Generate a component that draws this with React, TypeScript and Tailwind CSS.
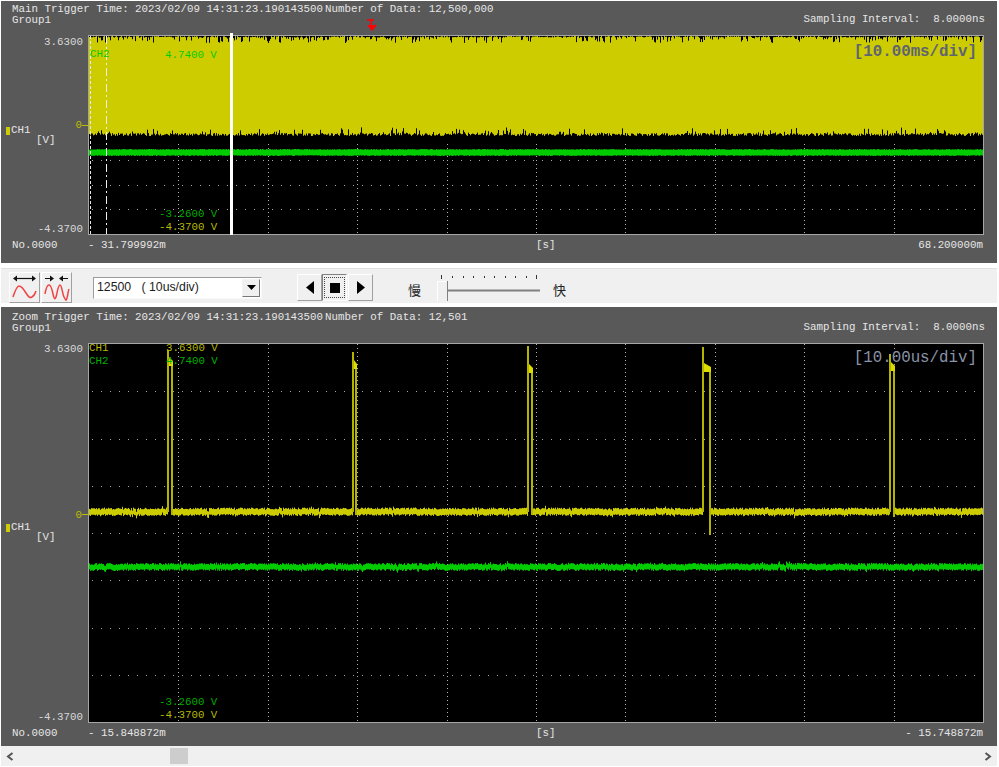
import { useMemo } from 'react';

const FONT = "font-['Liberation_Mono',monospace]";
const GRID_X = Array.from({ length: 9 }, (_, i) => Math.round(89.4 * (i + 1)) + 0.5);

// small seeded generator so the noise is the same on every run
function makeRand(seed: number) {
  let s = seed;
  return () => {
    s = (s * 16807) % 2147483647;
    return s / 2147483647;
  };
}

function Grid({ h }: { h: number }) {
  const rows = Array.from({ length: 7 }, (_, i) => Math.round((h / 8) * (i + 1)) + 0.5);
  return (
    <g>
      {GRID_X.map((x) => (
        <line key={x} x1={x} x2={x} y1={0} y2={h} stroke="#b4b4b4" strokeDasharray="1 3" />
      ))}
      {rows.map((y) => (
        <line key={y} x1={3} x2={894} y1={y} y2={y} stroke="#a8a8a8" strokeDasharray="1 8" />
      ))}
    </g>
  );
}

function MainWave() {
  const { top, bottom, green } = useMemo(() => {
    const r = makeRand(4711);
    let t = '';
    let b = '';
    let g = '';
    for (let x = 0; x < 894; x += 1) {
      const up = r() > 0.7 ? r() * 7 : r() * 1.5;
      t += `M${x + 0.5} 0V${up.toFixed(1)}`;
      const bot = 100 - r() * 3 - (r() > 0.85 ? r() * 6 : 0);
      b += `M${x + 0.5} ${bot.toFixed(1)}V105`;
      g += `M${x + 0.5} ${(113 + r() * 0.8).toFixed(1)}V${(120 - r() * 0.8).toFixed(1)}`;
    }
    return { top: t, bottom: b, green: g };
  }, []);

  return (
    <svg width="894" height="198" className="block">
      <rect width="894" height="198" fill="#000" />
      <Grid h={198} />
      <rect width="894" height="104" fill="#cccc00" />
      <path d={top} stroke="#000" fill="none" />
      <path d={bottom} stroke="#000" fill="none" />
      <path d={green} stroke="#00cc00" fill="none" />
      <line x1="1.5" x2="1.5" y1="0" y2="198" stroke="#e8e8e8" strokeDasharray="3 2" />
      <line x1="17.5" x2="17.5" y1="0" y2="198" stroke="#eeeeee" strokeDasharray="8 3 2 3" />
    </svg>
  );
}

const PULSES = [
  { x: 78, gap: 3, top: 6, blob: 13, low: 171 },
  { x: 263, gap: 2, top: 8, blob: 16, low: 171 },
  { x: 438, gap: 3, top: 2, blob: 20, low: 171 },
  { x: 613, gap: 6, top: 3, blob: 19, low: 191 },
  { x: 800, gap: 3, top: 10, blob: 18, low: 173 },
];

function ZoomWave() {
  const { yellow, green } = useMemo(() => {
    const r = makeRand(90210);
    let y = '';
    let g = '';
    for (let x = 0; x < 894; x += 1) {
      const inPulse = PULSES.some((p) => x >= p.x + 1 && x < p.x + p.gap + 2);
      if (!inPulse) {
        const d = (r() - 0.5) * 2 + (r() > 0.93 ? (r() - 0.5) * 5 : 0);
        y += `M${x + 0.5} ${(164.5 + d).toFixed(1)}V${(171 + d).toFixed(1)}`;
      }
      const n = (r() - 0.5) * 2 + (r() > 0.9 ? (r() - 0.5) * 4 : 0);
      g += `M${x + 0.5} ${(220 + n).toFixed(1)}V${(226 + n).toFixed(1)}`;
    }
    return { yellow: y, green: g };
  }, []);

  return (
    <svg width="894" height="378" className="block">
      <rect width="894" height="378" fill="#000" />
      <Grid h={378} />
      <path d={yellow} stroke="#cccc00" fill="none" />
      <path d={green} stroke="#00cc00" fill="none" />
      {PULSES.map((p) => (
        <g key={p.x}>
          <rect x={p.x} y={p.top} width={2} height={168 - p.top} fill="#b4b400" />
          <rect x={p.x + p.gap + 1} y={p.blob + 8} width={2} height={p.low - p.blob - 8} fill="#b4b400" />
          <path
            d={`M${p.x + 2} ${p.blob}l${p.gap + 1} 4v5h-${p.gap + 1}z`}
            fill="#dcdc00"
          />
        </g>
      ))}
    </svg>
  );
}

function Scope({
  zoom,
  title,
  count,
  scale,
  left,
  right,
  children,
}: {
  zoom?: boolean;
  title: string;
  count: string;
  scale: string;
  left: string;
  right: string;
  children: React.ReactNode;
}) {
  return (
    <section
      className={`${FONT} flex flex-col bg-[#595959] text-[10.8px] leading-[11px] text-[#e6e6e6] ${zoom ? 'flex-1' : 'h-[262px] shrink-0'}`}
    >
      <div className={`flex justify-between pl-[11px] pr-[12px] ${zoom ? 'h-[37px] pt-[5px]' : 'h-[35px] pt-[3px]'}`}>
        <div>
          <div className="flex whitespace-pre">
            <span className="w-[313px]">{title}</span>
            <span>{count}</span>
          </div>
          <div>Group1</div>
        </div>
        <div className="pt-[10px] whitespace-pre">Sampling Interval:  8.0000ns</div>
      </div>
      <div className="flex pr-[14px]">
        <div className="relative w-[88px] shrink-0">
          <span className={`absolute right-[6px] text-[#d8d8d8] ${zoom ? 'top-0' : 'top-[1px]'}`}>3.6300</span>
          <span className={`absolute right-[6px] text-[#d8d8d8] ${zoom ? 'bottom-[-1px]' : 'bottom-[-1px]'}`}>-4.3700</span>
          <span className={`absolute right-[7px] text-[#bcbc00] ${zoom ? 'top-[166px]' : 'top-[84px]'}`}>0</span>
          <span className={`absolute right-0 h-px w-[7px] bg-[#bcbc00] ${zoom ? 'top-[170px]' : 'top-[89px]'}`} />
          <span className={`absolute left-[5px] flex items-center gap-[1px] ${zoom ? 'top-[178px]' : 'top-[89px]'}`}>
            <i className="inline-block h-[8px] w-[4px] bg-[#cccc00]" />
            CH1
          </span>
          <span className={`absolute left-[35px] ${zoom ? 'top-[188px]' : 'top-[99px]'}`}>[V]</span>
        </div>
        <div className={`relative flex-1 outline outline-1 outline-[#a6a6a6] ${zoom ? 'h-[378px]' : 'h-[198px]'}`}>
          {children}
          <span
            className={`absolute right-[6px] whitespace-pre text-[15.8px] leading-[18px] ${zoom ? 'top-[5px] text-[#8a93a8]' : 'top-[7px] font-bold text-[#5f6472]'}`}
          >
            {scale}
          </span>
        </div>
      </div>
      <div className="flex flex-1 items-start pl-[11px] pr-[14px] pt-[6px]">
        <div className="flex w-[524px] whitespace-pre">
          <span className="w-[76px]">No.0000</span>
          <span>{left}</span>
        </div>
        <span>[s]</span>
        <span className="ml-auto">{right}</span>
      </div>
    </section>
  );
}

function Readout({ className, children }: { className: string; children: React.ReactNode }) {
  return <span className={`absolute whitespace-pre ${className}`}>{children}</span>;
}

function WaveIcon({ spread }: { spread?: boolean }) {
  return (
    <button className="flex h-[31px] w-[31px] items-center justify-center border border-white border-r-[#a0a0a0] border-b-[#a0a0a0] bg-[#f0f0f0]">
      {spread ? (
        <svg width="27" height="27" fill="none">
          <path d="M4 4.500h19" stroke="#111" strokeWidth="1.2" />
          <path d="M2 4.500l4-3v6zM25 4.500l-4-3v6z" fill="#111" />
          <path d="M2 23c2-6 4-11 6-11s4 2 7 7 4 5 6 4 3-3 4-6" stroke="#ee4444" strokeWidth="1.5" />
        </svg>
      ) : (
        <svg width="27" height="27" fill="none">
          <path d="M2 4.500h5M25 4.500h-5" stroke="#111" strokeWidth="1.2" />
          <path d="M11 4.500l-4-3v6zM16 4.500l4-3v6z" fill="#111" />
          <path d="M2 20c1-6 2-9 4-9s3 4 4 9 2 6 3 3 2-12 4-12 2 8 4 12 2 4 3 1 1-7 2-9" stroke="#ee4444" strokeWidth="1.5" />
        </svg>
      )}
    </button>
  );
}

function Toolbar() {
  return (
    <div className="box-border flex h-[39px] shrink-0 items-center border-t border-b-[4px] border-t-[#e0e0e0] border-b-white bg-[#f0f0f0] pl-[8px] pt-[3px]">
      <WaveIcon spread />
      <span className="w-px" />
      <WaveIcon />
      <div className="ml-[21px] flex h-[22px] w-[169px] items-center justify-between border border-[#9c9c9c] border-b-[#f8f8f8] border-r-[#f8f8f8] bg-white pl-[3px] font-['Liberation_Sans',sans-serif] text-[12.3px] whitespace-pre text-[#1c1c1c]">
        12500   ( 10us/div)
        <span className="mr-px flex h-[18px] w-[18px] items-center justify-center border border-[#f4f4f4] border-r-[#777] border-b-[#777] bg-[#f0f0f0]">
          <svg width="9" height="5"><path d="M0 0h9L4.500 5z" fill="#000" /></svg>
        </span>
      </div>
      <div className="ml-[35px] flex">
        <span className="flex h-[27px] w-[25px] items-center justify-center border border-white border-r-[#a0a0a0] border-b-[#a0a0a0]">
          <svg width="8" height="13"><path d="M8 0v13L0 6.500z" fill="#000" /></svg>
        </span>
        <span className="flex h-[27px] w-[25px] items-center justify-center border border-[#808080] border-r-white border-b-white">
          <span className="flex h-[21px] w-[21px] items-center justify-center border border-dotted border-[#444]">
            <i className="block h-[10px] w-[10px] bg-black" />
          </span>
        </span>
        <span className="ml-[1px] flex h-[27px] w-[25px] items-center justify-center border border-white border-r-[#a0a0a0] border-b-[#a0a0a0]">
          <svg width="8" height="13"><path d="M0 0v13L8 6.500z" fill="#000" /></svg>
        </span>
      </div>
      <span className="ml-[35px] mt-[5px] font-['Noto_Sans_CJK_SC',sans-serif] text-[13px] leading-[14px] text-[#222]">慢</span>
      <div className="ml-[16px] h-[27px] w-[112px]">
        <svg width="112" height="27" className="block">
          <path d="M4.500 1v4M15.500 2v2M26.500 2v2M36.500 2v2M47.500 2v2M57.500 2v2M68.500 2v2M78.500 2v2M89.500 2v2M99.500 1v4" stroke="#333" />
          <path d="M10 16.500h93" stroke="#808080" strokeWidth="2" />
          <path d="M0 27V7h10v20" fill="#f0f0f0" />
          <path d="M0.500 27V7.500h9" stroke="#fff" fill="none" />
          <path d="M10.500 7v20" stroke="#808080" />
        </svg>
      </div>
      <span className="ml-[4px] mt-[5px] font-['Noto_Sans_CJK_SC',sans-serif] text-[13px] leading-[14px] text-[#222]">快</span>
    </div>
  );
}

export default function App() {
  return (
    <div className="flex h-[767px] w-[999px] flex-col overflow-hidden bg-white pb-[1px] pl-[1px] pr-[2px] pt-[1px]">
      <Scope
        title="Main Trigger Time: 2023/02/09 14:31:23.190143500"
        count="Number of Data: 12,500,000"
        scale="[10.00ms/div]"
        left="- 31.799992m"
        right="68.200000m"
      >
        <MainWave />
        <Readout className="left-[1px] top-[13px] text-[#00cc00]">CH2</Readout>
        <Readout className="left-[76px] top-[14px] text-[#00cc00]">4.7400 V</Readout>
        <Readout className="left-[70px] top-[173px] text-[#00aa00]">-3.2600 V</Readout>
        <Readout className="left-[70px] top-[186px] text-[#b8b800]">-4.3700 V</Readout>
        <span className="absolute -top-[3px] left-[141px] h-[202px] w-[3px] bg-white" />
        <svg width="12" height="13" className="absolute -top-[17px] left-[277px]">
          <path d="M1 1h7M5 1v7M2 6l4 5 4-5" stroke="#ff0000" strokeWidth="1.4" fill="#ff0000" />
        </svg>
      </Scope>
      <div className="h-[5px] shrink-0 bg-white" />
      <Toolbar />
      <Scope
        zoom
        title="Zoom Trigger Time: 2023/02/09 14:31:23.190143500"
        count="Number of Data: 12,501"
        scale="[10.00us/div]"
        left="- 15.848872m"
        right="- 15.748872m"
      >
        <ZoomWave />
        <Readout className="left-0 top-[-1px] text-[#b8b800]">CH1</Readout>
        <Readout className="left-0 top-[12px] text-[#00b000]">CH2</Readout>
        <Readout className="left-[77px] top-[-1px] text-[#b8b800]">3.6300 V</Readout>
        <Readout className="left-[77px] top-[12px] text-[#00b000]">4.7400 V</Readout>
        <Readout className="left-[70px] top-[353px] text-[#00aa00]">-3.2600 V</Readout>
        <Readout className="left-[70px] top-[366px] text-[#b8b800]">-4.3700 V</Readout>
      </Scope>
      <div className="flex h-[20px] shrink-0 items-center bg-[#f0f0f0] px-[5px]">
        <svg width="8" height="9" fill="none"><path d="M6.500 1L2 4.500 6.500 8" stroke="#555" strokeWidth="2" /></svg>
        <span className="ml-[156px] mr-auto h-[16px] w-[18px] bg-[#cdcdcd]" />
        <svg width="8" height="9" fill="none"><path d="M1.500 1L6 4.500 1.500 8" stroke="#555" strokeWidth="2" /></svg>
      </div>
    </div>
  );
}
